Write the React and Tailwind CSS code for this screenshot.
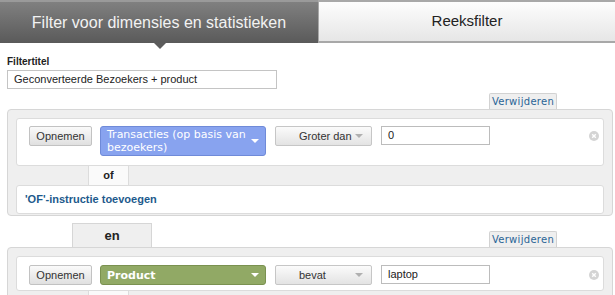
import React from "react";

const sel = "flex justify-between items-center h-[20px] border border-[#c6c6c6] rounded-[2px] bg-gradient-to-b from-[#fbfbfb] to-[#e3e3e3] text-[11px] text-[#333]";

function CloseDot() {
  return (
    <svg width="10" height="10" viewBox="0 0 10 10" className="mt-[5px]">
      <circle cx="5" cy="5" r="5" fill="#d4d4d4" />
      <path d="M3.2 3.2 L6.8 6.8 M6.8 3.2 L3.2 6.8" stroke="#fff" strokeWidth="1.4" />
    </svg>
  );
}

function Arrow({ color }) {
  return <span className={"w-0 h-0 border-l-[4px] border-r-[4px] border-t-[4px] border-l-transparent border-r-transparent " + color} />;
}

function ConditionRow({ dimension, tone, operator, value }) {
  return (
    <div className="flex items-start pl-[12px] pr-[4px]">
      <button className="h-[20px] w-[63px] border border-[#c2c2c2] rounded-[2px] bg-gradient-to-b from-[#fafafa] to-[#e0e0e0] text-[11px] text-[#333]">
        Opnemen
      </button>
      <div className={"ml-[8px] w-[166px] flex justify-between items-center rounded-[3px] border px-[6px] text-white font-['DejaVu_Sans',sans-serif] " + tone}>
        <span className="leading-[13px] py-[1px]">{dimension}</span>
        <Arrow color="border-t-white" />
      </div>
      <div className={sel + " ml-[9px] w-[97px] pl-[23px] pr-[8px]"}>
        <span>{operator}</span>
        <Arrow color="border-t-[#b0b0b0]" />
      </div>
      <div className="ml-[9px] w-[109px] h-[19px] border border-[#bcbcbc] bg-white px-[6px] text-[11px] leading-[17px] text-[#222]">
        {value}
      </div>
      <div className="flex-1 flex justify-end">
        <CloseDot />
      </div>
    </div>
  );
}

function Remove() {
  return (
    <div className="w-[68px] h-[16px] border border-b-0 border-[#d2d2d2] bg-[#efefef] rounded-t-[2px] text-center text-[10px] tracking-[0.3px] leading-[15px] text-[#2a6496] font-['DejaVu_Sans',sans-serif]">
      Verwijderen
    </div>
  );
}

export default function App() {
  return (
    <div className="w-[615px] h-[295px] overflow-hidden bg-white font-['Liberation_Sans',Arial,sans-serif]">
      <div className="flex h-[43px]">
        <div className="relative w-[318px] border-t-[2px] border-[#9a9a9a] bg-gradient-to-b from-[#808080] to-[#5a5a5a] flex items-center justify-center text-[#f2f2f2] text-[16px]">
          Filter voor dimensies en statistieken
          <span className="absolute left-[154px] -bottom-[6px] w-0 h-0 border-l-[6px] border-r-[6px] border-t-[6px] border-l-transparent border-r-transparent border-t-[#5c5c5c]" />
        </div>
        <div className="flex-1 border-t-[2px] border-b-[2px] border-l border-[#a8a8a8] bg-gradient-to-b from-[#fdfdfd] to-[#e6e6e6] flex items-center justify-center text-[#222] text-[15px]">
          Reeksfilter
        </div>
      </div>

      <div className="pl-[7px] pr-[2px]">
        <div className="mt-[13px] text-[10px] font-bold text-[#222] leading-[12px]">Filtertitel</div>
        <div className="mt-[2px] w-[270px] h-[19px] border border-[#c4c4c4] px-[6px] text-[11px] leading-[17px] text-[#222]">
          Geconverteerde Bezoekers + product
        </div>

        <div className="mt-[4px] flex justify-end pr-[56px]">
          <Remove />
        </div>
        <div className="border border-[#d6d6d6] rounded-[4px] bg-[#efefef] px-[8px] pt-[8px] pb-[1px]">
          <div className="bg-white border border-[#dcdcdc] rounded-[3px] pt-[7px] h-[48px]">
            <ConditionRow
              dimension="Transacties (op basis van bezoekers)"
              tone="text-[11px] bg-[#88a3ef] border-[#6f8ad8]"
              operator="Groter dan"
              value="0"
            />
          </div>
          <div className="ml-[72px] w-[41px] h-[19px] border-x border-[#dcdcdc] bg-[#fafafa] text-center text-[11px] font-bold leading-[19px] text-[#222]">
            of
          </div>
          <div className="bg-white border border-[#dcdcdc] rounded-[3px] h-[29px] px-[8px] text-[11px] font-bold leading-[27px] text-[#1d5a8c]">
            'OF'-instructie toevoegen
          </div>
        </div>

        <div className="mt-[7px] flex items-end justify-between pr-[56px]">
          <div className="ml-[65px] w-[80px] h-[24px] border border-b-0 border-[#d6d6d6] bg-[#efefef] text-center text-[13px] font-bold leading-[24px] text-[#222]">
            en
          </div>
          <Remove />
        </div>
        <div className="border border-[#d6d6d6] rounded-[4px] bg-[#efefef] px-[8px] pt-[8px] h-[60px]">
          <div className="bg-white border border-[#dcdcdc] rounded-[3px] pt-[8px] h-[35px]">
            <ConditionRow
              dimension="Product"
              tone="text-[11px] font-bold h-[20px] bg-[#91a965] border-[#7a9150]"
              operator="bevat"
              value="laptop"
            />
          </div>
          <div className="ml-[72px] w-[41px] h-[19px] border-x border-[#dcdcdc] bg-[#fafafa]" />
        </div>
      </div>
    </div>
  );
}
